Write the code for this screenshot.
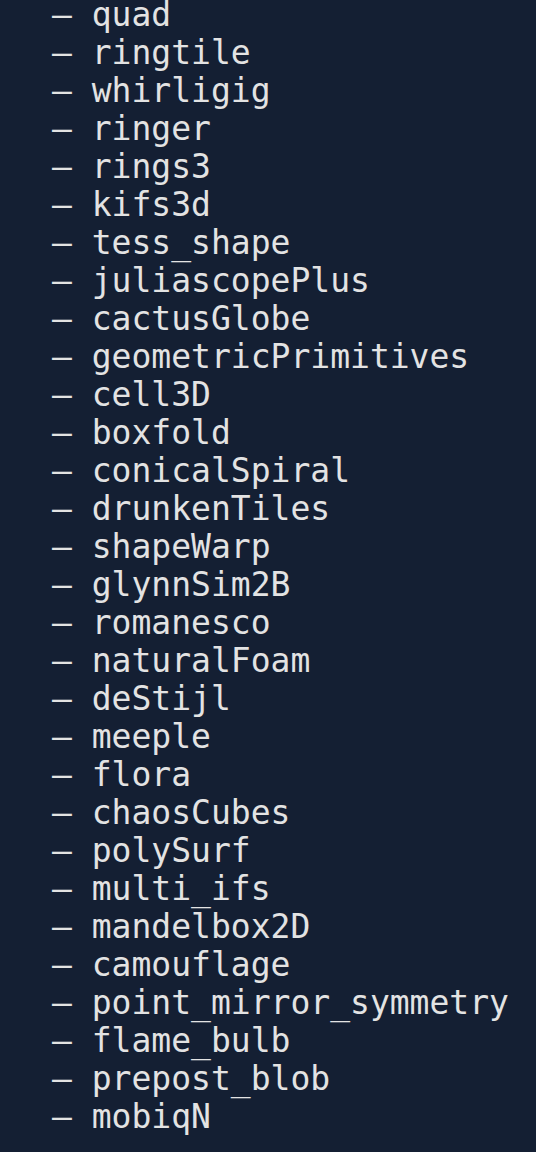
const items = [
  "quad",
  "ringtile",
  "whirligig",
  "ringer",
  "rings3",
  "kifs3d",
  "tess_shape",
  "juliascopePlus",
  "cactusGlobe",
  "geometricPrimitives",
  "cell3D",
  "boxfold",
  "conicalSpiral",
  "drunkenTiles",
  "shapeWarp",
  "glynnSim2B",
  "romanesco",
  "naturalFoam",
  "deStijl",
  "meeple",
  "flora",
  "chaosCubes",
  "polySurf",
  "multi_ifs",
  "mandelbox2D",
  "camouflage",
  "point_mirror_symmetry",
  "flame_bulb",
  "prepost_blob",
  "mobiqN",
];

export default function App() {
  return (
    <div className="min-h-screen w-full bg-[#141f33] overflow-hidden">
      <ul className="-mt-[4px] pl-[52px] font-['DejaVu_Sans_Mono',monospace] text-[33px] leading-[38px] text-[#e3e3e3] whitespace-pre">
        {items.map((name) => (
          <li key={name}>{"\u2013 " + name}</li>
        ))}
      </ul>
    </div>
  );
}
